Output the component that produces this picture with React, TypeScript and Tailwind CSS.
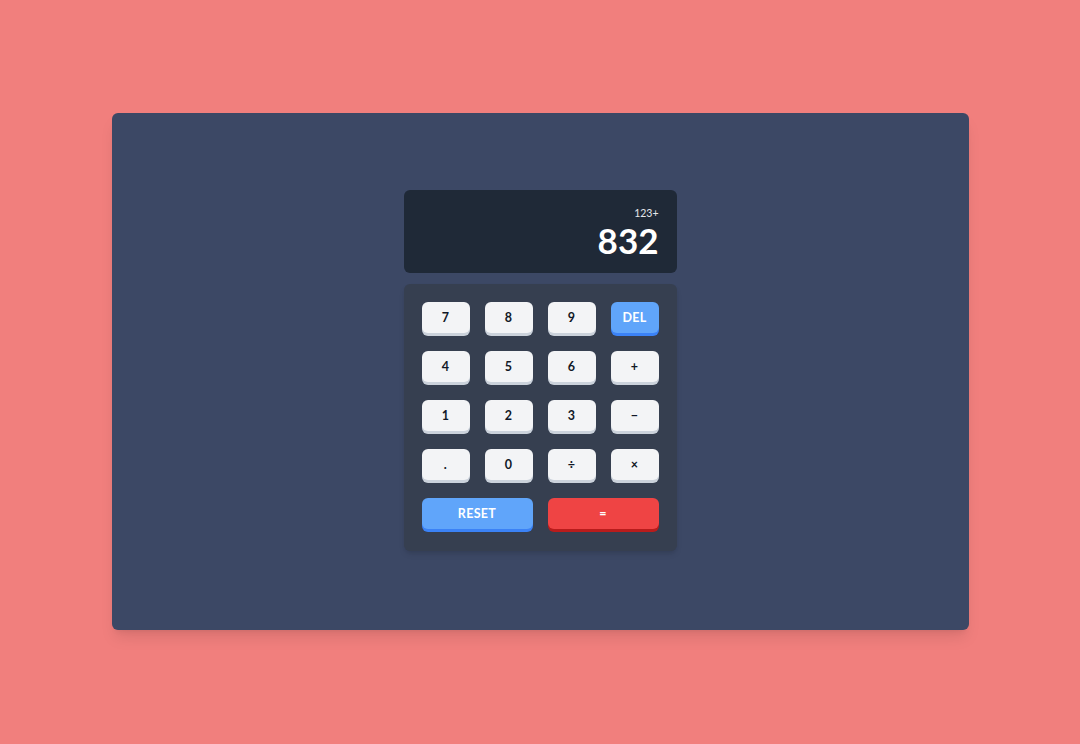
import React from 'react';

type KeyProps = {
  label: string;
  variant?: 'light' | 'blue' | 'red';
  wide?: boolean;
};

const Key: React.FC<KeyProps> = ({ label, variant = 'light', wide = false }) => {
  const styles =
    variant === 'blue'
      ? 'bg-[#60a5fa] text-white shadow-[0_3px_0_#3b82f6]'
      : variant === 'red'
        ? 'bg-[#ef4444] text-white shadow-[0_3px_0_#b91c1c]'
        : 'bg-[#f3f4f6] text-[#111827] shadow-[0_3px_0_#cbd2db]';
  return (
    <button
      className={`h-[31px] mb-[3px] pt-[2px] rounded-[6px] flex items-center justify-center text-[12.5px] font-bold tracking-wide ${styles} ${wide ? 'col-span-2' : ''}`}
    >
      {label}
    </button>
  );
};

export default function App() {
  const keys: KeyProps[] = [
    { label: '7' },
    { label: '8' },
    { label: '9' },
    { label: 'DEL', variant: 'blue' },
    { label: '4' },
    { label: '5' },
    { label: '6' },
    { label: '+' },
    { label: '1' },
    { label: '2' },
    { label: '3' },
    { label: '−' },
    { label: '.' },
    { label: '0' },
    { label: '÷' },
    { label: '×' },
    { label: 'RESET', variant: 'blue', wide: true },
    { label: '=', variant: 'red', wide: true },
  ];

  return (
    <div
      className="min-h-screen w-full bg-[#f17f7d] flex items-start justify-center pt-[113px]"
      style={{ fontFamily: '"Lato", "Open Sans", sans-serif' }}
    >
      <div className="w-[857px] h-[517px] bg-[#3c4865] rounded-[6px] shadow-lg flex flex-col items-center pt-[77px]">
        {/* Display */}
        <div className="w-[273px] h-[83px] bg-[#1f2937] rounded-[6px] flex flex-col items-end justify-end px-[18px] pb-[15px]">
          <div className="text-[10.5px] text-gray-200 leading-none mb-[5px]">123+</div>
          <div className="text-[35px] font-bold text-white leading-none">832</div>
        </div>

        {/* Keypad */}
        <div className="w-[273px] mt-[11px] bg-[#363f50] rounded-[6px] p-[18px] pb-[19px] shadow-md">
          <div className="grid grid-cols-4 gap-x-[15px] gap-y-[15px]">
            {keys.map((k) => (
              <Key key={k.label} {...k} />
            ))}
          </div>
        </div>
      </div>
    </div>
  );
}
